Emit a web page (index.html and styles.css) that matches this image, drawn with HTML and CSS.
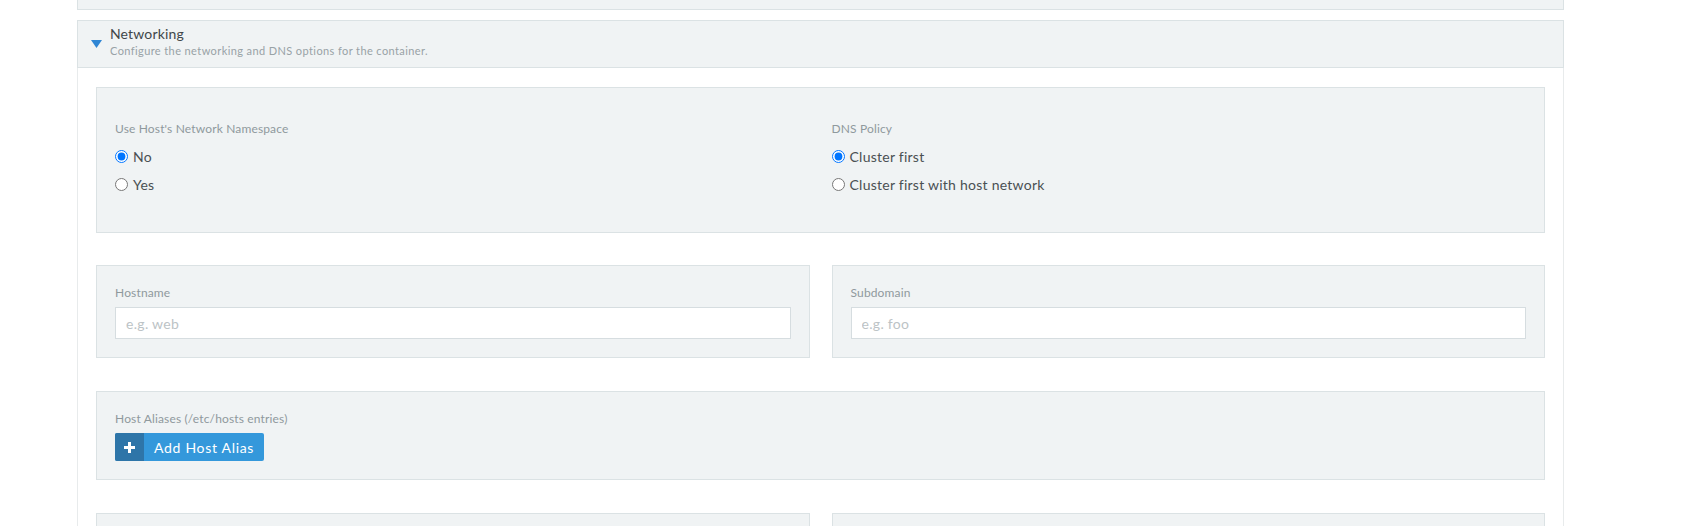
FILE: index.html
```html
<!DOCTYPE html>
<html>
<head>
<meta charset="utf-8">
<link rel="stylesheet" href="styles.css">
</head>
<body>
<div class="page">
  <section class="acc collapsed">
    <div class="acc-head">
      <svg class="caret" width="11" height="11" viewBox="0 0 11 11"><path d="M1.5 0L9.5 5.5L1.5 11z" fill="#2f86d4"/></svg>
      <div class="head-text">
        <div class="title">Command</div>
        <div class="sub">Configure the command that the container will run when it starts.</div>
      </div>
    </div>
  </section>

  <section class="acc">
    <div class="acc-head">
      <svg class="caret" width="11" height="8" viewBox="0 0 11 8"><path d="M0 0H11L5.5 8z" fill="#2f86d4"/></svg>
      <div class="head-text">
        <div class="title">Networking</div>
        <div class="sub">Configure the networking and DNS options for the container.</div>
      </div>
    </div>
    <div class="acc-body">
      <div class="box box-tall grid2">
        <div class="field">
          <div class="label">Use Host's Network Namespace</div>
          <label class="radio"><input type="radio" name="hostnet" checked><span>No</span></label>
          <label class="radio"><input type="radio" name="hostnet"><span>Yes</span></label>
        </div>
        <div class="field">
          <div class="label">DNS Policy</div>
          <label class="radio"><input type="radio" name="dns" checked><span>Cluster first</span></label>
          <label class="radio"><input type="radio" name="dns"><span>Cluster first with host network</span></label>
        </div>
      </div>

      <div class="grid2 block">
        <div class="box">
          <div class="label">Hostname</div>
          <input class="text" type="text" placeholder="e.g. web">
        </div>
        <div class="box">
          <div class="label">Subdomain</div>
          <input class="text" type="text" placeholder="e.g. foo">
        </div>
      </div>

      <div class="box block">
        <div class="label">Host Aliases (/etc/hosts entries)</div>
        <button class="btn" type="button">
          <span class="btn-icon"><svg width="11" height="11" viewBox="0 0 11 11"><path d="M4 0h3v4h4v3H7v4H4V7H0V4h4z" fill="#fff"/></svg></span>
          <span class="btn-text">Add Host Alias</span>
        </button>
      </div>

      <div class="grid2 block">
        <div class="box">
          <div class="label">Nameservers</div>
          <button class="btn" type="button">
            <span class="btn-icon"><svg width="11" height="11" viewBox="0 0 11 11"><path d="M4 0h3v4h4v3H7v4H4V7H0V4h4z" fill="#fff"/></svg></span>
            <span class="btn-text">Add Nameserver</span>
          </button>
        </div>
        <div class="box">
          <div class="label">Search Domains</div>
          <button class="btn" type="button">
            <span class="btn-icon"><svg width="11" height="11" viewBox="0 0 11 11"><path d="M4 0h3v4h4v3H7v4H4V7H0V4h4z" fill="#fff"/></svg></span>
            <span class="btn-text">Add Search Domain</span>
          </button>
        </div>
      </div>
    </div>
  </section>
</div>
</body>
</html>
```

FILE: styles.css
```css
* { box-sizing: border-box; }

html, body {
  margin: 0;
  background: #fff;
  font-family: "Lato", "Open Sans", sans-serif;
  color: #4a5053;
}

body { overflow: hidden; height: 526px; }

.page {
  margin: -38px 0 0 77px;
  width: 1487px;
}

.acc {
  border-left: 1px solid #e8ebec;
  border-right: 1px solid #e8ebec;
  margin-bottom: 10px;
}

.acc.collapsed { border: 0; }

.acc-head {
  height: 48px;
  margin: 0 -1px;
  background: #f0f3f4;
  border: 1px solid #dbe2e4;
  display: flex;
  align-items: flex-start;
  padding: 4px 13px 0 13px;
}

.acc.collapsed .acc-head { margin: 0; }

.caret {
  display: block;
  flex: none;
  margin: 15px 8px 0 0;
}

.title {
  font-size: 14px;
  line-height: 18px;
  letter-spacing: 0.15px;
  color: #41474a;
}

.sub {
  font-size: 11px;
  line-height: 14px;
  margin-top: 1px;
  letter-spacing: 0.4px;
  color: #98a2a6;
}

.acc-body {
  padding: 19px 18px 0 18px;
}

.box {
  background: #f0f3f4;
  border: 1px solid #dbe2e4;
  padding: 18px;
}

.box-tall {
  padding: 32px 18px 34px;
}

.grid2 {
  display: grid;
  grid-template-columns: 1fr 1fr;
  gap: 22px;
}

.grid2 > .box { min-width: 0; }

.block { margin-top: 32px; }
.grid2.block + .block { margin-top: 33px; }
.box.block + .block { margin-top: 33px; }

.label {
  font-size: 12px;
  line-height: 18px;
  letter-spacing: 0.15px;
  color: #8f999d;
  margin-bottom: 5px;
}

.field .label { margin-bottom: 4px; }

.radio {
  display: flex;
  align-items: center;
  height: 28px;
  font-size: 14px;
  letter-spacing: 0.25px;
  color: #4a5053;
}

.radio input {
  width: 13px;
  height: 13px;
  margin: 0 5px 0 0;
}

.text {
  display: block;
  width: 100%;
  height: 32px;
  border: 1px solid #d6dde0;
  background: #fff;
  padding: 0 10px;
  font-family: inherit;
  font-size: 14px;
  letter-spacing: 0.3px;
  color: #4a5053;
  outline: none;
}

.text::placeholder { color: #bcc3c6; }

.btn {
  display: inline-flex;
  align-items: stretch;
  height: 28px;
  padding: 0;
  border: 0;
  border-radius: 2px;
  overflow: hidden;
  background: #3498db;
  font-family: inherit;
  font-size: 14px;
  color: #fff;
  cursor: pointer;
}

.btn-icon {
  width: 29px;
  background: #2e75a8;
  display: flex;
  align-items: center;
  justify-content: center;
}

.btn-text {
  display: flex;
  align-items: center;
  padding: 0 10px;
  letter-spacing: 0.7px;
}
```
